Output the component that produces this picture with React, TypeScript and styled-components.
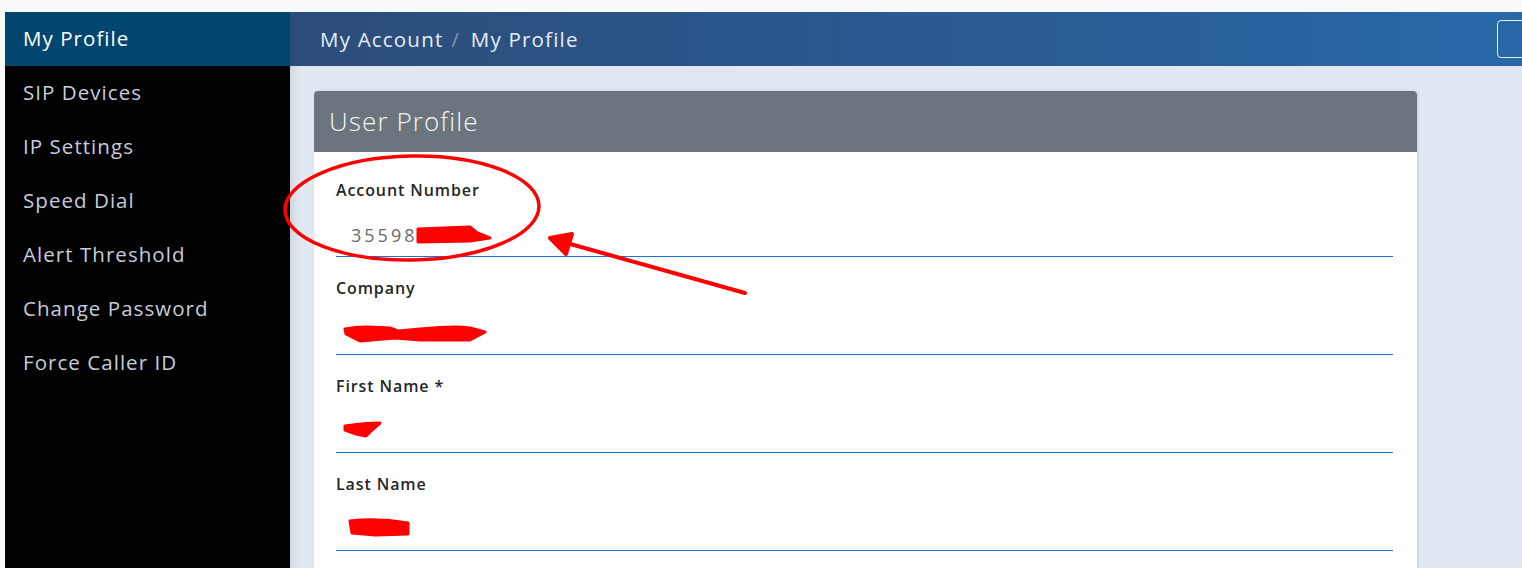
import React from 'react'
import styled, { createGlobalStyle } from 'styled-components'

const GlobalStyle = createGlobalStyle`
  html, body {
    margin: 0;
    padding: 0;
    background: #f8f9fb;
    font-family: 'Open Sans', 'Liberation Sans', sans-serif;
    overflow: hidden;
  }
`

const Page = styled.div`
  position: relative;
  display: flex;
  height: 568px;
  padding: 12px 0 0 5px;
  box-sizing: border-box;
`

const Sidebar = styled.nav`
  width: 285px;
  flex-shrink: 0;
  background: #000;
  display: flex;
  flex-direction: column;
`

const NavItem = styled.div<{ $active?: boolean }>`
  height: 54px;
  display: flex;
  align-items: center;
  padding-left: 18px;
  padding-bottom: 2px;
  box-sizing: border-box;
  font-size: 20.5px;
  letter-spacing: 1.05px;
  color: ${(p) => (p.$active ? '#ffffff' : '#c9ccd8')};
  background: ${(p) => (p.$active ? '#01466f' : 'transparent')};
`

const Main = styled.div`
  flex: 1;
  display: flex;
  flex-direction: column;
  min-width: 0;
`

const TopBar = styled.header`
  height: 54px;
  flex-shrink: 0;
  display: flex;
  align-items: center;
  padding-left: 30px;
  background: linear-gradient(90deg, #2c4d7a 0%, #2a5b92 55%, #2868a8 100%);
  position: relative;
`

const Crumb = styled.span`
  font-size: 20.5px;
  letter-spacing: 1.2px;
  color: #e8ecf4;
`

const Sep = styled.span`
  font-size: 20px;
  color: #8394ad;
  margin: 0 12px 0 8px;
`

const TopButton = styled.div`
  position: absolute;
  left: 1207px;
  top: 8px;
  width: 60px;
  height: 36px;
  border: 1px solid #e6edf6;
  border-radius: 4px;
`

const Content = styled.div`
  flex: 1;
  background: #e2e8f2;
  padding: 25px 0 0 24px;
  box-shadow: inset 8px 0 8px -6px rgba(0, 0, 0, 0.12);
`

const Card = styled.section`
  width: 1103px;
  background: #fff;
  border-radius: 4px 4px 0 0;
  box-shadow: 1px 0 3px rgba(0, 0, 0, 0.12);
  height: 500px;
`

const CardHeader = styled.div`
  height: 61px;
  background: #6c757d;
  border-radius: 4px 4px 0 0;
  display: flex;
  align-items: center;
  padding-left: 15px;
  padding-bottom: 2px;
  box-sizing: border-box;
  font-size: 26px;
  font-weight: 300;
  letter-spacing: 1.1px;
  color: #f4f5f7;
`

const CardBody = styled.div`
  padding: 27px 24px 0 22px;
`

const Field = styled.div`
  margin-bottom: 20px;
`

const Label = styled.div`
  font-size: 16px;
  line-height: 22px;
  font-weight: 600;
  letter-spacing: 0.9px;
  color: #262626;
  margin-bottom: 12px;
`

const InputLine = styled.div`
  height: 43px;
  border-bottom: 1px solid #1976d2;
  display: flex;
  align-items: center;
  padding-left: 15px;
  font-size: 18px;
  letter-spacing: 3px;
  color: #6b6b6b;
`

const Overlay = styled.svg`
  position: absolute;
  left: 0;
  top: 0;
  pointer-events: none;
`

const navItems = [
  'My Profile',
  'SIP Devices',
  'IP Settings',
  'Speed Dial',
  'Alert Threshold',
  'Change Password',
  'Force Caller ID',
]

const fields = [
  { label: 'Account Number', value: '35598' },
  { label: 'Company', value: '' },
  { label: 'First Name *', value: '' },
  { label: 'Last Name', value: '' },
]

const App: React.FC = () => {
  return (
    <>
      <GlobalStyle />
      <Page>
        <Sidebar>
          {navItems.map((item, i) => (
            <NavItem key={item} $active={i === 0}>
              {item}
            </NavItem>
          ))}
        </Sidebar>
        <Main>
          <TopBar>
            <Crumb>My Account</Crumb>
            <Sep>/</Sep>
            <Crumb>My Profile</Crumb>
            <TopButton />
          </TopBar>
          <Content>
            <Card>
              <CardHeader>User Profile</CardHeader>
              <CardBody>
                {fields.map((f) => (
                  <Field key={f.label}>
                    <Label>{f.label}</Label>
                    <InputLine>{f.value}</InputLine>
                  </Field>
                ))}
              </CardBody>
            </Card>
          </Content>
        </Main>

        {/* red annotations drawn over the screenshot */}
        <Overlay width="1522" height="568" viewBox="0 0 1522 568">
          <g fill="none" stroke="#f00" strokeLinecap="round" strokeLinejoin="round">
            <ellipse cx="412" cy="208" rx="127" ry="52" strokeWidth="3.5" transform="rotate(-1 412 208)" />
            <path d="M745 293 L556 240" strokeWidth="4" />
            <path d="M550 238 L572 234 L566 254 Z" strokeWidth="4" fill="#f00" />
          </g>
          <g fill="#f00" stroke="#f00" strokeLinecap="round" strokeLinejoin="round">
            <path d="M418 229 L470 227 L476 232 L480 234 L490 238 L470 241 L418 242 Z" strokeWidth="3" />
            <path d="M345 329 C362 326 372 327 390 328 L398 331 L420 329 C440 327 460 326 470 328 L485 332 L470 340 L420 340 L395 338 L360 341 L346 334 Z" strokeWidth="3" />
            <path d="M345 426 C358 424 368 423 380 423 L372 430 L366 436 L356 434 L345 430 Z" strokeWidth="3" />
            <path d="M350 521 C368 519 390 520 408 523 L408 534 L375 535 L352 533 Z" strokeWidth="3" />
          </g>
        </Overlay>
      </Page>
    </>
  )
}

export default App
